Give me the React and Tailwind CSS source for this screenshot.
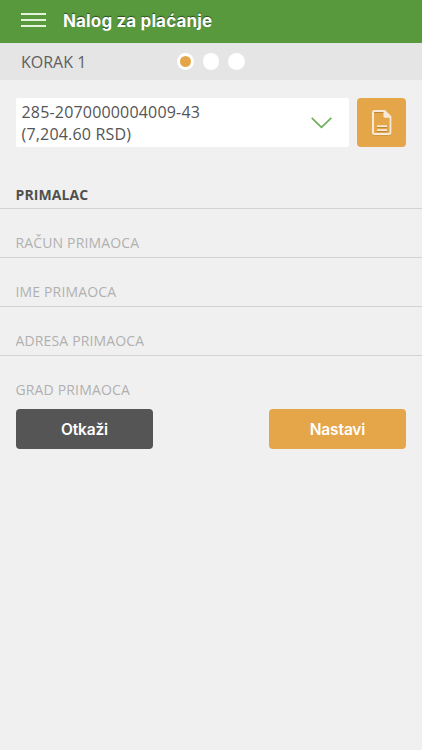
import React, { useState } from "react";

const fields = [
  { name: "account", placeholder: "RAČUN PRIMAOCA" },
  { name: "name", placeholder: "IME PRIMAOCA" },
  { name: "address", placeholder: "ADRESA PRIMAOCA" },
  { name: "city", placeholder: "GRAD PRIMAOCA" },
];

function Header() {
  return (
    <header className="flex h-[43px] items-center bg-[#58993d] pl-[21px] pb-[3px]">
      <button type="button" aria-label="Meni" className="flex w-[25px] flex-col gap-[4px]">
        <span className="h-[2px] w-full bg-[#e4f3db]"></span>
        <span className="h-[2px] w-full bg-[#e4f3db]"></span>
        <span className="h-[2px] w-full bg-[#e4f3db]"></span>
      </button>
      <h1 className="mt-[2px] ml-[17px] whitespace-nowrap font-['Inter',sans-serif] text-[17px] leading-[22px] font-bold tracking-[0.14px] text-white [text-shadow:0_-1px_1px_rgba(0,0,0,0.5)]">
        Nalog za plaćanje
      </h1>
    </header>
  );
}

function Steps({ current }) {
  return (
    <div className="flex h-[37px] items-center bg-[#e5e5e5] pl-[21px]">
      <span className="w-[156px] text-[16px] leading-[22px] text-[#606060]">KORAK {current}</span>
      <div className="flex gap-[9px]">
        {[1, 2, 3].map(step => (
          <span key={step} className="flex h-[16.5px] w-[16.5px] items-center justify-center rounded-full bg-white">
            {step === current && <span className="h-[11px] w-[11px] rounded-full bg-[#e5a64a]"></span>}
          </span>
        ))}
      </div>
    </div>
  );
}

function App() {
  const [form, setForm] = useState({ account: "", name: "", address: "", city: "" });

  const handleChange = e => setForm({ ...form, [e.target.name]: e.target.value });

  return (
    <div className="min-h-screen w-full bg-[#f0f0f0] font-['Open_Sans',sans-serif]">
      <Header />
      <Steps current={1} />

      {/* Account picker */}
      <div className="flex gap-[8px] pt-[18px] pr-[16px] pl-[16px]">
        <button type="button" className="flex h-[49px] flex-1 items-center justify-between rounded-[2px] bg-white pr-[17px] pl-[5.5px] text-left">
          <span className="whitespace-nowrap text-[16px] leading-[22px] tracking-[0.18px] text-[#555]">
            285-2070000004009-43<br />(7,204.60 RSD)
          </span>
          <svg width="21" height="12" viewBox="0 0 21 12" fill="none" className="mt-[1px]">
            <path d="M0.7 0.9 L10.5 10.3 L20.3 0.9" stroke="#6bad58" strokeWidth="1.6" />
          </svg>
        </button>
        <button type="button" aria-label="Šabloni" className="flex h-[49px] w-[49px] items-center justify-center rounded-[4px] bg-[#e5a64a]">
          <svg width="22" height="28" viewBox="0 0 22 28" fill="none">
            <path d="M3.6 3 H14 L19.6 8.7 V24.2 Q19.6 25.7 18.1 25.7 H3.6 Q2.1 25.7 2.1 24.2 V4.5 Q2.1 3 3.6 3 Z" stroke="#b9863c" strokeWidth="1.8" />
            <path d="M6 18.2 H16 M6 22.2 H16" stroke="#b9863c" strokeWidth="1.4" />
            <path d="M3.5 2 H13.7 L19.5 7.8 V23.5 Q19.5 25 18 25 H3.5 Q2 25 2 23.5 V3.5 Q2 2 3.5 2 Z" stroke="#f6ead7" strokeWidth="2" />
            <path d="M12.5 2 V7.3 Q12.5 8.8 14 8.8 H19.5 L13.7 2 Z" fill="#f6ead7" />
            <path d="M6 17.1 H16 M6 21.1 H16" stroke="#f6ead7" strokeWidth="1.7" />
          </svg>
        </button>
      </div>

      {/* Recipient */}
      <h2 className="mt-[37px] flex h-[25px] items-start border-b border-[#d3d3d6] pl-[15.5px] text-[14px] leading-[22px] font-bold tracking-[0.1px] text-[#505050]">
        PRIMALAC
      </h2>
      <form onSubmit={e => e.preventDefault()}>
        <div className="divide-y divide-[#d3d3d3]">
          {fields.map(field => (
            <div key={field.name} className="flex h-[49px] items-start pt-[21px] pl-[15.5px]">
              <input
                name={field.name}
                placeholder={field.placeholder}
                value={form[field.name]}
                onChange={handleChange}
                className="h-[24px] w-full bg-transparent text-[14px] leading-[22px] tracking-[0.15px] text-[#555] outline-none placeholder:text-[#b0b0b0]"
              />
            </div>
          ))}
        </div>
        <footer className="flex justify-between pt-[3.5px] pr-[16px] pl-[16px] font-['Inter',sans-serif] text-[15.5px] font-semibold tracking-[-0.15px] text-white">
          <button type="button" className="h-[40.5px] w-[137px] rounded-[4px] bg-[#555] pt-[1.5px]">Otkaži</button>
          <button type="submit" className="h-[40.5px] w-[137px] rounded-[4px] bg-[#e5a64a] pt-[1.5px]">Nastavi</button>
        </footer>
      </form>
    </div>
  );
}

export default App;
